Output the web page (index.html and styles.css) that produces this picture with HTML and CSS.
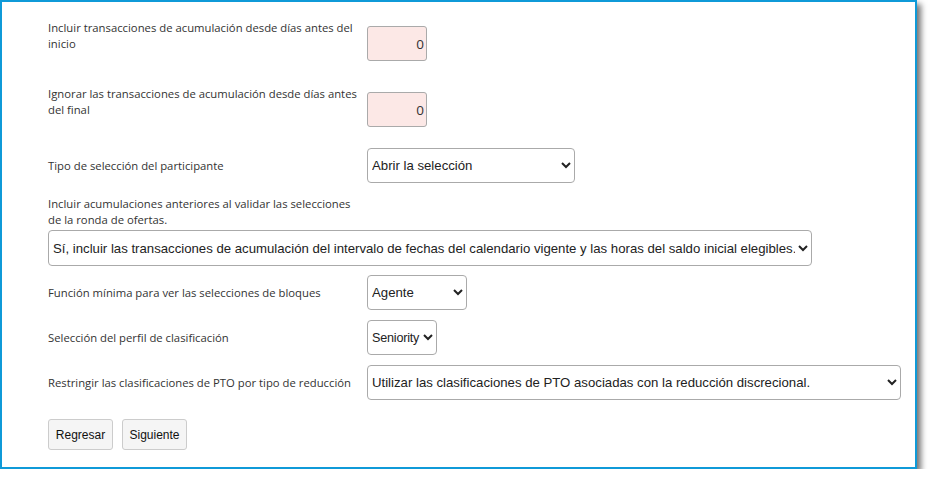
FILE: index.html
```html
<!DOCTYPE html>
<html lang="es">
<head>
<meta charset="utf-8">
<title>Configuración</title>
<link rel="stylesheet" href="styles.css">
</head>
<body>
<div class="frame">
  <form class="form">
    <div class="row row-top r1">
      <label class="lbl">Incluir transacciones de acumulación desde días antes del<br>inicio</label>
      <input class="num" type="text" value="0">
    </div>
    <div class="row row-top r2">
      <label class="lbl">Ignorar las transacciones de acumulación desde días antes<br>del final</label>
      <input class="num" type="text" value="0">
    </div>
    <div class="row r3">
      <label class="lbl">Tipo de selección del participante</label>
      <select class="sel sel-tipo"><option>Abrir la selección</option></select>
    </div>
    <div class="block r4">
      <label class="lbl lbl-block">Incluir acumulaciones anteriores al validar las selecciones<br>de la ronda de ofertas.</label>
      <select class="sel sel-wide"><option>Sí, incluir las transacciones de acumulación del intervalo de fechas del calendario vigente y las horas del saldo inicial elegibles.</option></select>
    </div>
    <div class="row r5">
      <label class="lbl">Función mínima para ver las selecciones de bloques</label>
      <select class="sel sel-agente"><option>Agente</option></select>
    </div>
    <div class="row r6">
      <label class="lbl">Selección del perfil de clasificación</label>
      <select class="sel sel-sen"><option>Seniority</option></select>
    </div>
    <div class="row r7">
      <label class="lbl">Restringir las clasificaciones de PTO por tipo de reducción</label>
      <select class="sel sel-pto"><option>Utilizar las clasificaciones de PTO asociadas con la reducción discrecional.</option></select>
    </div>
    <div class="buttons">
      <button type="button" class="btn">Regresar</button>
      <button type="button" class="btn">Siguiente</button>
    </div>
  </form>
</div>
</body>
</html>
```

FILE: styles.css
```css
html, body {
  margin: 0;
  padding: 0;
  background: #ffffff;
}

.frame {
  box-sizing: border-box;
  width: 917px;
  height: 469px;
  border: 2px solid #0f9ad8;
  background: #ffffff;
  box-shadow: 4px 4px 6px rgba(0, 0, 0, 0.55);
  padding: 18px 0 0 46px;
}

.form {
  margin: 0;
}

.row {
  display: flex;
  align-items: center;
}

.row-top {
  align-items: flex-start;
}

.lbl {
  flex: none;
  width: 319px;
  font-family: "Open Sans", "Noto Sans", sans-serif;
  font-size: 11.3px;
  line-height: 16px;
  color: #333333;
}

.lbl-block {
  display: block;
  width: auto;
}

.num {
  box-sizing: border-box;
  margin: 6px 0 0 0;
  width: 60px;
  height: 35px;
  border: 1px solid #aaaaaa;
  border-radius: 3px;
  background: #fce8e6;
  text-align: right;
  padding: 0 2px;
  font-family: "Open Sans", "Noto Sans", sans-serif;
  font-size: 13.5px;
  color: #333333;
}

.sel {
  box-sizing: border-box;
  height: 35px;
  margin: 0;
  border: 1px solid #aaaaaa;
  border-radius: 4px;
  background-color: #ffffff;
  padding: 0;
  font-family: "Liberation Sans", Arial, sans-serif;
  font-size: 13.2px;
  color: #222222;
}

.sel-tipo { width: 208px; }
.sel-wide { width: 764px; height: 36px; margin-top: 2px; display: block; }
.sel-agente { width: 100px; }
.sel-sen { width: 70px; font-size: 12.6px; letter-spacing: -0.2px; }
.sel-pto { width: 534px; }

.r1 { margin-bottom: 25px; }
.r2 { margin-bottom: 21px; }
.r3 { margin-bottom: 13px; }
.r4 { margin-bottom: 9px; }
.r5 { margin-bottom: 10px; }
.r6 { margin-bottom: 10px; }
.r7 { margin-bottom: 19px; }

.buttons {
  display: flex;
  gap: 9px;
}

.btn {
  box-sizing: border-box;
  width: 65px;
  height: 31px;
  margin: 0;
  padding: 0;
  border: 1px solid #cccccc;
  border-radius: 3px;
  background: #f5f5f5;
  font-family: "Liberation Sans", Arial, sans-serif;
  font-size: 12px;
  color: #111111;
}
```
